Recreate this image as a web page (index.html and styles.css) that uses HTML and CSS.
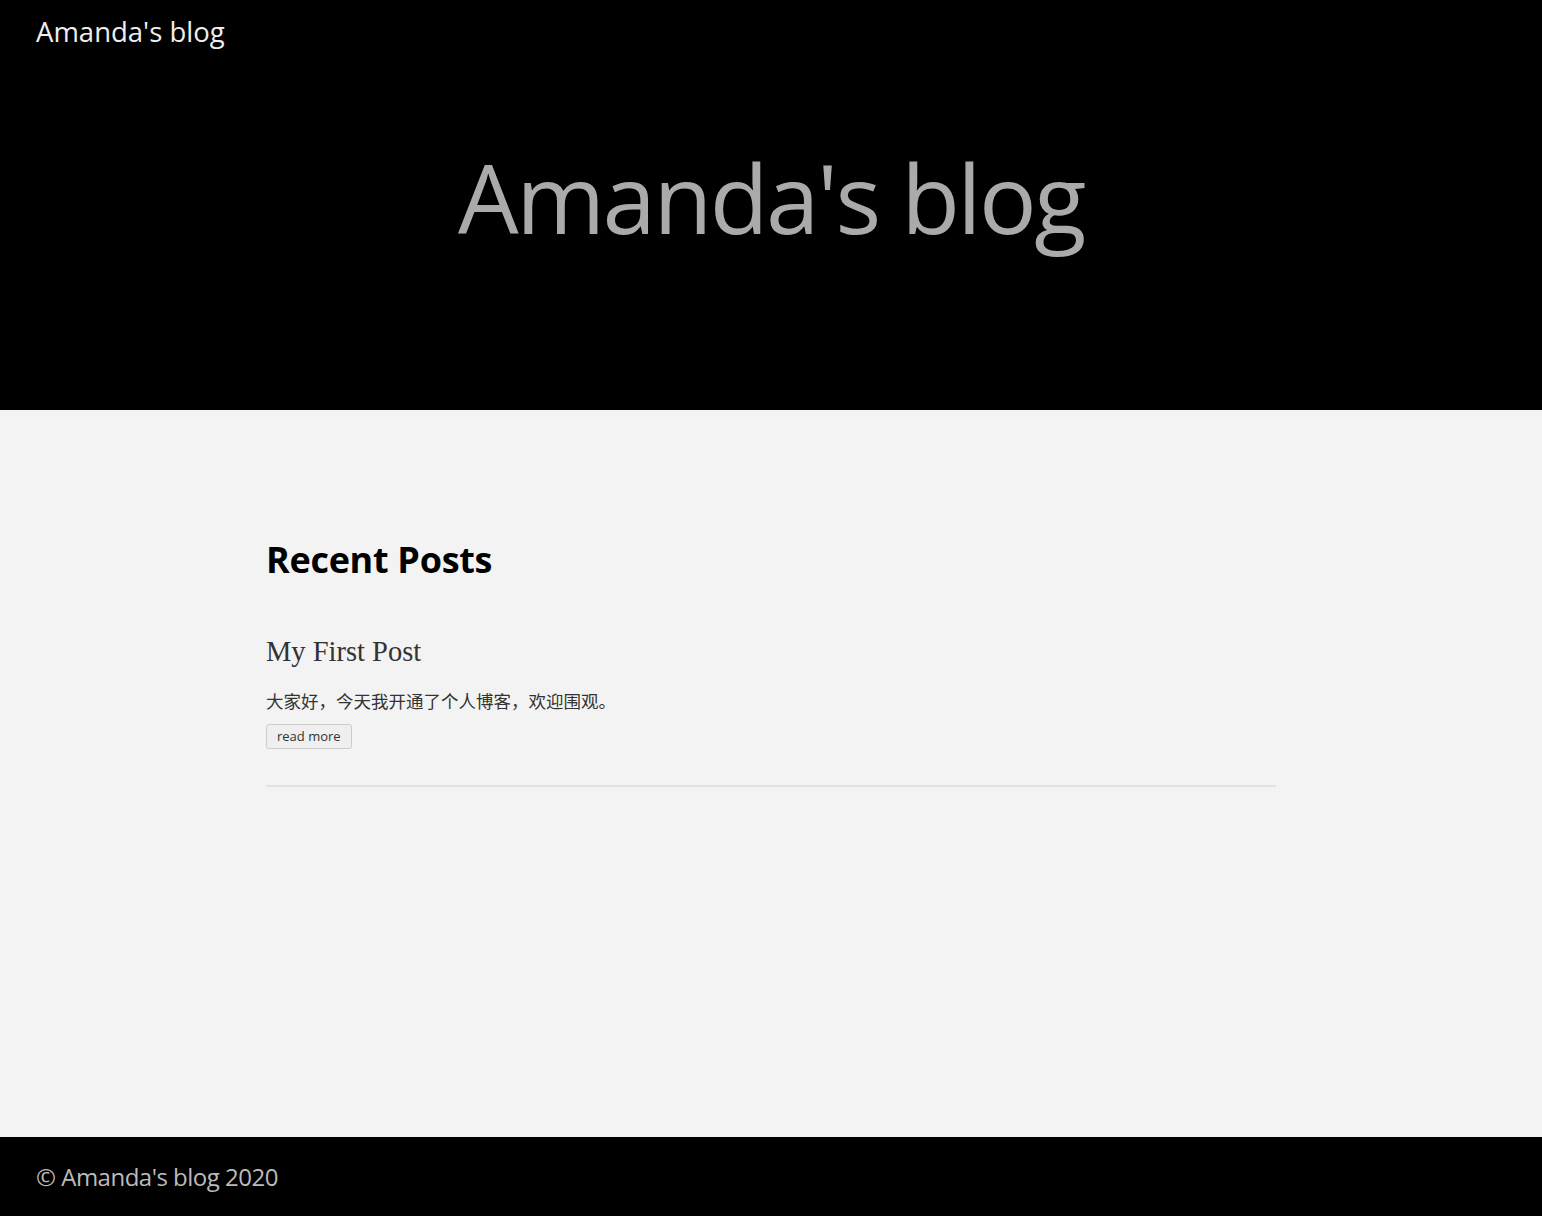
FILE: index.html
```html
<!DOCTYPE html>
<html lang="zh">
<head>
<meta charset="utf-8">
<title>Amanda's blog</title>
<link rel="stylesheet" href="styles.css">
</head>
<body>
<header class="site-header">
  <nav class="nav"><a class="brand" href="#">Amanda's blog</a></nav>
  <div class="hero"><h1 class="hero-title">Amanda's blog</h1></div>
</header>
<main class="main">
  <div class="container">
    <h2 class="section-title">Recent Posts</h2>
    <article class="post">
      <h3 class="post-title">My First Post</h3>
      <p class="post-excerpt">大家好，今天我开通了个人博客，欢迎围观。</p>
      <button class="read-more">read more</button>
    </article>
  </div>
</main>
<footer class="site-footer">
  <p class="copyright">© Amanda's blog 2020</p>
</footer>
</body>
</html>
```
FILE: styles.css
```css
* { box-sizing: border-box; }
html, body { margin: 0; padding: 0; }
body {
  font-family: "Open Sans", "Noto Sans", "Noto Sans CJK SC", sans-serif;
  background: #f3f3f3;
  color: #000;
  min-height: 1216px;
  display: flex;
  flex-direction: column;
}
.site-header {
  background: #000;
  height: 410px;
  display: flex;
  flex-direction: column;
}
.nav {
  padding: 13px 36px 0;
  height: 60px;
}
.brand {
  color: #eee;
  text-decoration: none;
  font-size: 27.5px;
  letter-spacing: 0;
}
.hero {
  display: flex;
  justify-content: center;
}
.hero-title {
  margin: 79px 0 0;
  font-weight: 400;
  font-size: 96px;
  line-height: 1.2;
  color: #aaa;
  letter-spacing: -2.5px;
}
.main {
  flex: 1;
  padding: 128px 0 0;
}
.container {
  width: 1010px;
  margin: 0 auto;
  padding-bottom: 36px;
  border-bottom: 2px solid #e2e2e2;
}
.section-title {
  margin: 0 0 52px;
  font-size: 36px;
  font-weight: 700;
  line-height: 1.2;
  letter-spacing: -0.3px;
}
.post-title {
  margin: 0 0 19px;
  font-family: "Liberation Serif", "DejaVu Serif", serif;
  font-weight: 400;
  font-size: 28.5px;
  color: #333;
  line-height: 1.3;
}
.post-excerpt {
  margin: 0 0 10px;
  font-family: "Noto Sans CJK SC", sans-serif;
  font-size: 17.5px;
  color: #333;
  line-height: 1.4;
}
.read-more {
  font-family: "Open Sans", "Noto Sans", sans-serif;
  font-size: 13px;
  color: #333;
  background: #efefef;
  border: 1px solid #ccc;
  border-radius: 3px;
  padding: 2px 10px 3px;
  line-height: 18px;
}
.site-footer {
  background: #000;
  height: 79px;
  display: flex;
  align-items: center;
  padding: 0 36px;
}
.copyright {
  margin: 0;
  color: #bbb;
  font-size: 24px;
  letter-spacing: -0.5px;
}
```
